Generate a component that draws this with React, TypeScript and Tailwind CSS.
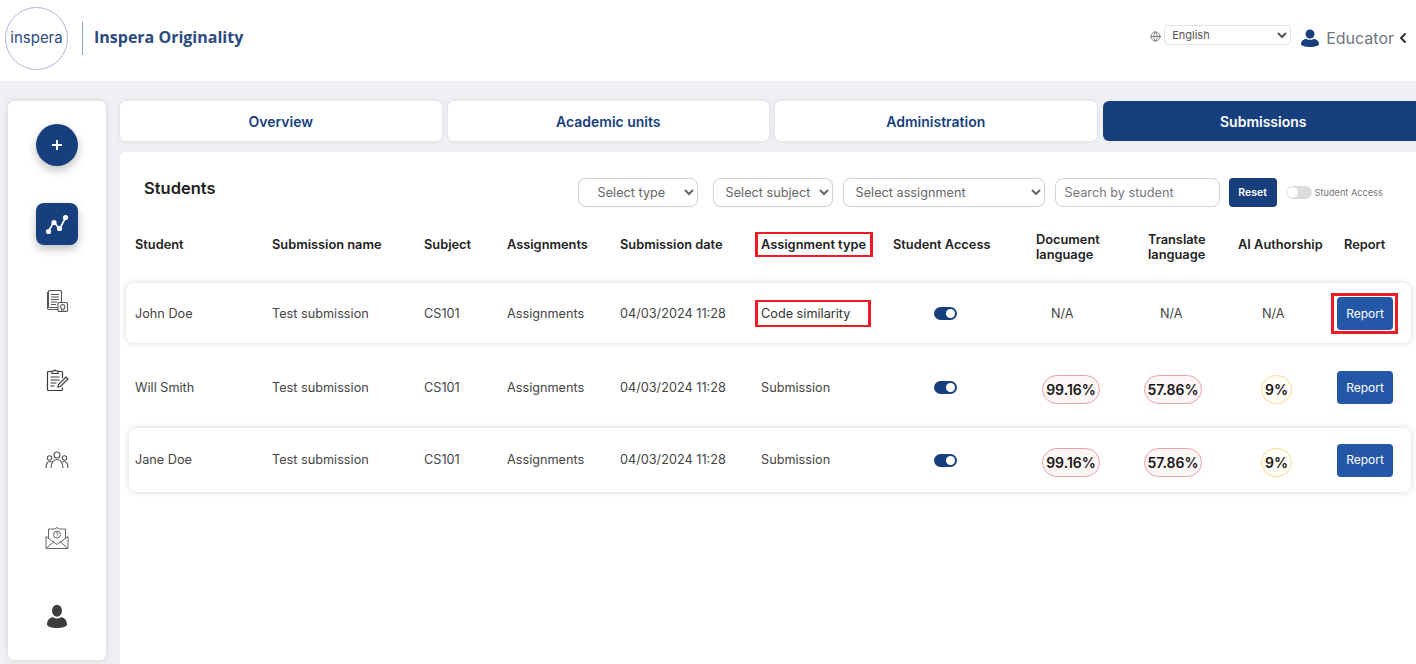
import { ChevronLeft, Globe } from 'lucide-react';

type Row = {
  name: string;
  type: string;
  doc: string;
  translate: string;
  ai: string;
};

const rows: Row[] = [
  { name: 'John Doe', type: 'Code similarity', doc: 'N/A', translate: 'N/A', ai: 'N/A' },
  { name: 'Will Smith', type: 'Submission', doc: '99.16%', translate: '57.86%', ai: '9%' },
  { name: 'Jane Doe', type: 'Submission', doc: '99.16%', translate: '57.86%', ai: '9%' },
];

const gridCols =
  'grid grid-cols-[137px_152px_83px_113px_141px_132px_143px_104px_98px_99px_auto] items-center';

function PersonIcon({ className }: { className: string }) {
  return (
    <svg viewBox="0 0 20 20" className={className} fill="currentColor" preserveAspectRatio="none">
      <circle cx="10" cy="5.600" r="5" />
      <path d="M0 17c0-4 3.400-6 6-6 1.200.7 2.600 1 4 1s2.800-.3 4-1c2.600 0 6 2 6 6 0 1.500-4.500 3-10 3S0 18.500 0 17z" />
    </svg>
  );
}

function Sidebar() {
  return (
    <aside className="flex h-[559px] w-[98px] shrink-0 flex-col items-center rounded-md bg-white pt-[23px] shadow-[0_0_6px_rgba(0,0,0,0.12)]">
      <button className="flex h-[42px] w-[42px] items-center justify-center rounded-full bg-[#173f7d] shadow-[0_4px_10px_rgba(0,0,0,0.25)]">
        <svg viewBox="0 0 10 10" className="h-[10px] w-[10px]" stroke="white" strokeWidth="2">
          <path d="M5 0v10M0 5h10" />
        </svg>
      </button>
      <button className="mt-[37px] flex h-[42px] w-[42px] items-center justify-center rounded-lg bg-[#173f7d] shadow-[0_4px_10px_rgba(0,0,0,0.25)]">
        <svg viewBox="0 0 24 24" className="h-[24px] w-[24px]" stroke="white" strokeWidth="1.600" fill="white">
          <path d="M3 20l6-10 5.500 7L21 5" fill="none" />
          <circle cx="3.500" cy="19.500" r="1.800" />
          <circle cx="9" cy="10.500" r="1.800" />
          <circle cx="14.500" cy="16.500" r="1.800" />
          <circle cx="20.500" cy="5.500" r="1.800" />
        </svg>
      </button>
      <svg viewBox="0 0 24 24" className="mt-[44px] h-[24px] w-[24px] text-[#555]" fill="none" stroke="currentColor" strokeWidth="1.100">
        <path d="M3.500 3.500h-1v15.500a1.500 1.500 0 0 0 1.500 1.500h9" />
        <path d="M4.500 1.500h11a1 1 0 0 1 1 1v12M4.500 1.500a1 1 0 0 0-1 1v15a1 1 0 0 0 1 1h8" />
        <path d="M6 5.500h8M6 8h8M6 10.500h8M6 13h6M6 15.500h5" />
        <rect x="13" y="13.500" width="9.500" height="9" rx="1" fill="white" />
        <path d="M17.700 15.500a2.200 2.200 0 0 1 1.200 4v1.500h-2.400v-1.500a2.200 2.200 0 0 1 1.200-4z" />
      </svg>
      <svg viewBox="0 0 24 24" className="mt-[55px] h-[24px] w-[24px] text-[#3a3a3a]" fill="none" stroke="currentColor" strokeWidth="1.200">
        <path d="M7 3.500H3.500a1 1 0 0 0-1 1v17a1 1 0 0 0 1 1h13a1 1 0 0 0 1-1v-2" />
        <path d="M17.500 10V4.500a1 1 0 0 0-1-1H13" />
        <path d="M7 5.500V3h2a1 1 0 0 1 2 0h2v2.500z" />
        <path d="M5.500 9h9M5.500 12h9M5.500 15h6M5.500 18h4" />
        <path d="M13 19l.5-2.500 7.500-7.500 2 2-7.500 7.500z" />
      </svg>
      <svg viewBox="0 0 24 18" className="mt-[59px] h-[18px] w-[24px] text-[#555]" fill="none" stroke="currentColor" strokeWidth="1.100">
        <circle cx="12" cy="4" r="3" />
        <circle cx="4.500" cy="7" r="2.200" />
        <circle cx="19.500" cy="7" r="2.200" />
        <path d="M6 17c0-5 2.500-8.500 6-8.500s6 3.500 6 8.500" />
        <path d="M1 17c0-4 1.500-6.500 3.800-6.500.7 0 1.300.2 1.900.6M23 17c0-4-1.500-6.500-3.800-6.500-.7 0-1.300.2-1.900.6" />
      </svg>
      <svg viewBox="0 0 24 24" className="mt-[57px] h-[24px] w-[24px] text-[#666]" fill="none" stroke="currentColor" strokeWidth="1">
        <path d="M1 10.500v12h22v-12M1 22.500l8.500-7.500M23 22.500L14.500 15M1 10.500l11 8 11-8" />
        <path d="M3.500 12.500V3h6.500l2-1.500 2 1.500h6.500v9.500" />
        <circle cx="12" cy="8.500" r="3.500" />
        <path d="M11 7.500a1 1 0 1 1 1.500 1l-.5.600v.400M12 10.800v.200" />
      </svg>
      <PersonIcon className="mt-[54px] h-[24px] w-[20px] text-[#3d3d3d]" />
    </aside>
  );
}

function Toggle() {
  return (
    <div className="ml-[41px] flex h-[13px] w-[23px] items-center justify-end rounded-full bg-[#173f7d] pr-[2px]">
      <div className="h-[9px] w-[9px] rounded-full bg-white" />
    </div>
  );
}

function Score({ value, tone }: { value: string; tone: 'red' | 'yellow' }) {
  return (
    <span
      className={`flex h-[29px] items-center justify-center rounded-full border text-[14px] font-semibold text-[#161616] ${
        tone === 'red'
          ? 'w-[58px] border-[#eaa2aa] bg-[#fdf6f6]'
          : 'w-[31px] border-[#f7dd94] bg-[#fffdf6]'
      }`}
    >
      {value}
    </span>
  );
}

function ScoreCell({ value, tone, naOffset, pillOffset }: { value: string; tone: 'red' | 'yellow'; naOffset: string; pillOffset: string }) {
  if (value === 'N/A') {
    return <div className={naOffset}>N/A</div>;
  }
  return (
    <div className={`${pillOffset} translate-y-[2px]`}>
      <Score value={value} tone={tone} />
    </div>
  );
}

function TableRow({ row, index }: { row: Row; index: number }) {
  const flagged = index === 0;
  const rowStyle = [
    'ml-[6px] mr-[5px] mt-[19px] h-[60px] rounded-lg pl-[9px] pt-[1px] shadow-[0_0_6px_rgba(0,0,0,0.16)]',
    'ml-[6px] mr-[5px] mt-[12px] h-[65px] pl-[9px]',
    'ml-[9px] mr-[5px] mt-[8px] h-[64px] rounded-lg pl-[6px] shadow-[0_0_6px_rgba(0,0,0,0.16)]',
  ][index];

  return (
    <div className={`${gridCols} ${rowStyle} text-[12.700px] text-[#444]`}>
      <div>{row.name}</div>
      <div>Test submission</div>
      <div>CS101</div>
      <div>Assignments</div>
      <div>04/03/2024 11:28</div>
      {flagged ? (
        <div className="-ml-[6px] mr-[22px] border-x-[3px] border-y-2 border-[#ed1c24] py-[2px] pl-[3px] text-[#333]">{row.type}</div>
      ) : (
        <div>{row.type}</div>
      )}
      <Toggle />
      <ScoreCell value={row.doc} tone="red" naOffset="pl-[15px]" pillOffset="pl-[6px]" />
      <ScoreCell value={row.translate} tone="red" naOffset="pl-[20px]" pillOffset="pl-[4px]" />
      <ScoreCell value={row.ai} tone="yellow" naOffset="pl-[24px]" pillOffset="pl-[23px]" />
      {flagged ? (
        <div className="-my-[4px] -ml-[6px] w-[67px] border-[3px] border-[#ed1c24] px-[3px] py-[1px]">
          <button className="h-[33px] w-[56px] rounded-sm bg-[#2557a9] text-[12px] text-white">Report</button>
        </div>
      ) : (
        <button className="h-[33px] w-[56px] rounded-sm bg-[#2557a9] text-[12px] text-white">Report</button>
      )}
    </div>
  );
}

export default function App() {
  const tabs = ['Overview', 'Academic units', 'Administration', 'Submissions'];
  const selectClass =
    'h-[29px] rounded-lg border border-[#d4d4d4] bg-white text-[12.700px] text-[#666] shadow-[0_0_2px_rgba(0,0,0,0.08)]';

  return (
    <div className="flex h-[664px] w-[1416px] flex-col overflow-hidden bg-[#eff0f3] font-['Inter',sans-serif]">
      <header className="flex h-[81px] shrink-0 items-center bg-white pl-[5px]">
        <div className="mt-[-4px] flex h-[63px] w-[63px] items-center justify-center rounded-full border border-[#a9b8d3] text-[15px] text-[#2b4a7f]">
          inspera
        </div>
        <div className="ml-[14px] mt-[-4px] h-[33px] w-px bg-[#8fa3c4]" />
        <div className="ml-[11px] mt-[-7px] font-['Open_Sans',sans-serif] text-[16px] font-bold text-[#2b4a7f]">
          Inspera Originality
        </div>
        <div className="ml-auto mt-[-9px] flex items-center">
          <Globe className="h-[11px] w-[11px] text-[#555]" strokeWidth={1.500} />
          <select className="ml-[3px] mt-[-2px] h-[20px] w-[127px] rounded-sm border border-[#e3e3e3] bg-white pl-[3px] text-[11px] text-[#555]">
            <option>English</option>
          </select>
          <PersonIcon className="ml-[10px] mt-[3px] h-[18px] w-[18px] text-[#173f7d]" />
          <span className="ml-[7px] mt-[3px] text-[16px] text-[#6f7680]">Educator</span>
          <ChevronLeft className="ml-[1px] mr-[5px] mt-[3px] h-[16px] w-[16px] text-[#333]" strokeWidth={3} />
        </div>
      </header>

      <div className="flex min-h-0 flex-1 pl-[8px] pt-[20px]">
        <Sidebar />
        <main className="ml-[14px] flex min-w-0 flex-1 flex-col">
          <nav className="flex h-[40px] shrink-0 gap-[6px]">
            {tabs.map((tab) => (
              <div
                key={tab}
                className={`flex w-[321.500px] shrink-0 items-center justify-center rounded-md text-[14px] font-semibold ${
                  tab === 'Submissions'
                    ? 'bg-[#173f7d] text-white'
                    : 'bg-white text-[#173f7d] shadow-[0_0_4px_rgba(0,0,0,0.1)]'
                }`}
              >
                {tab}
              </div>
            ))}
          </nav>

          <section className="mt-[11px] flex-1 rounded-tl-md bg-white pt-[26px]">
            <div className="flex h-[29px] items-center">
              <h2 className="mb-[8px] ml-[24px] text-[16.500px] font-semibold text-[#222]">Students</h2>
              <select className={`${selectClass} ml-[362px] w-[120px] pl-[15px]`}>
                <option>Select type</option>
              </select>
              <select className={`${selectClass} ml-[15px] w-[120px] pl-[8px]`}>
                <option>Select subject</option>
              </select>
              <select className={`${selectClass} ml-[10px] w-[202px] pl-[8px]`}>
                <option>Select assignment</option>
              </select>
              <input
                placeholder="Search by student"
                className="ml-[10px] h-[29px] w-[165px] rounded-lg border border-[#d4d4d4] pl-[9px] text-[12.700px] text-[#666] placeholder:text-[#777]"
              />
              <button className="ml-[9px] h-[29px] w-[48px] rounded-sm bg-[#173f7d] text-[10.500px] font-semibold text-white">
                Reset
              </button>
              <div className="ml-[9px] flex h-[13px] w-[26px] items-center rounded-full bg-[#dcdcdc] pl-[1px]">
                <div className="h-[11px] w-[11px] rounded-full bg-white" />
              </div>
              <span className="ml-[3px] text-[9.200px] text-[#777]">Student Access</span>
            </div>

            <div className={`${gridCols} mt-[17px] h-[40px] pl-[15px] text-[12.800px] font-semibold leading-[15px] text-[#222]`}>
              <div>Student</div>
              <div>Submission name</div>
              <div>Subject</div>
              <div>Assignments</div>
              <div>Submission date</div>
              <div className="-ml-[6px] mr-[20px] border-x-[3px] border-y-2 border-[#ed1c24] py-[3px] pl-[3px]">Assignment type</div>
              <div>Student Access</div>
              <div className="pt-[5px]">Document<br />language</div>
              <div className="pl-[8px] pt-[5px]">Translate<br />language</div>
              <div>AI Authorship</div>
              <div className="pl-[7px]">Report</div>
            </div>

            {rows.map((row, index) => (
              <TableRow key={row.name} row={row} index={index} />
            ))}
          </section>
        </main>
      </div>
    </div>
  );
}
